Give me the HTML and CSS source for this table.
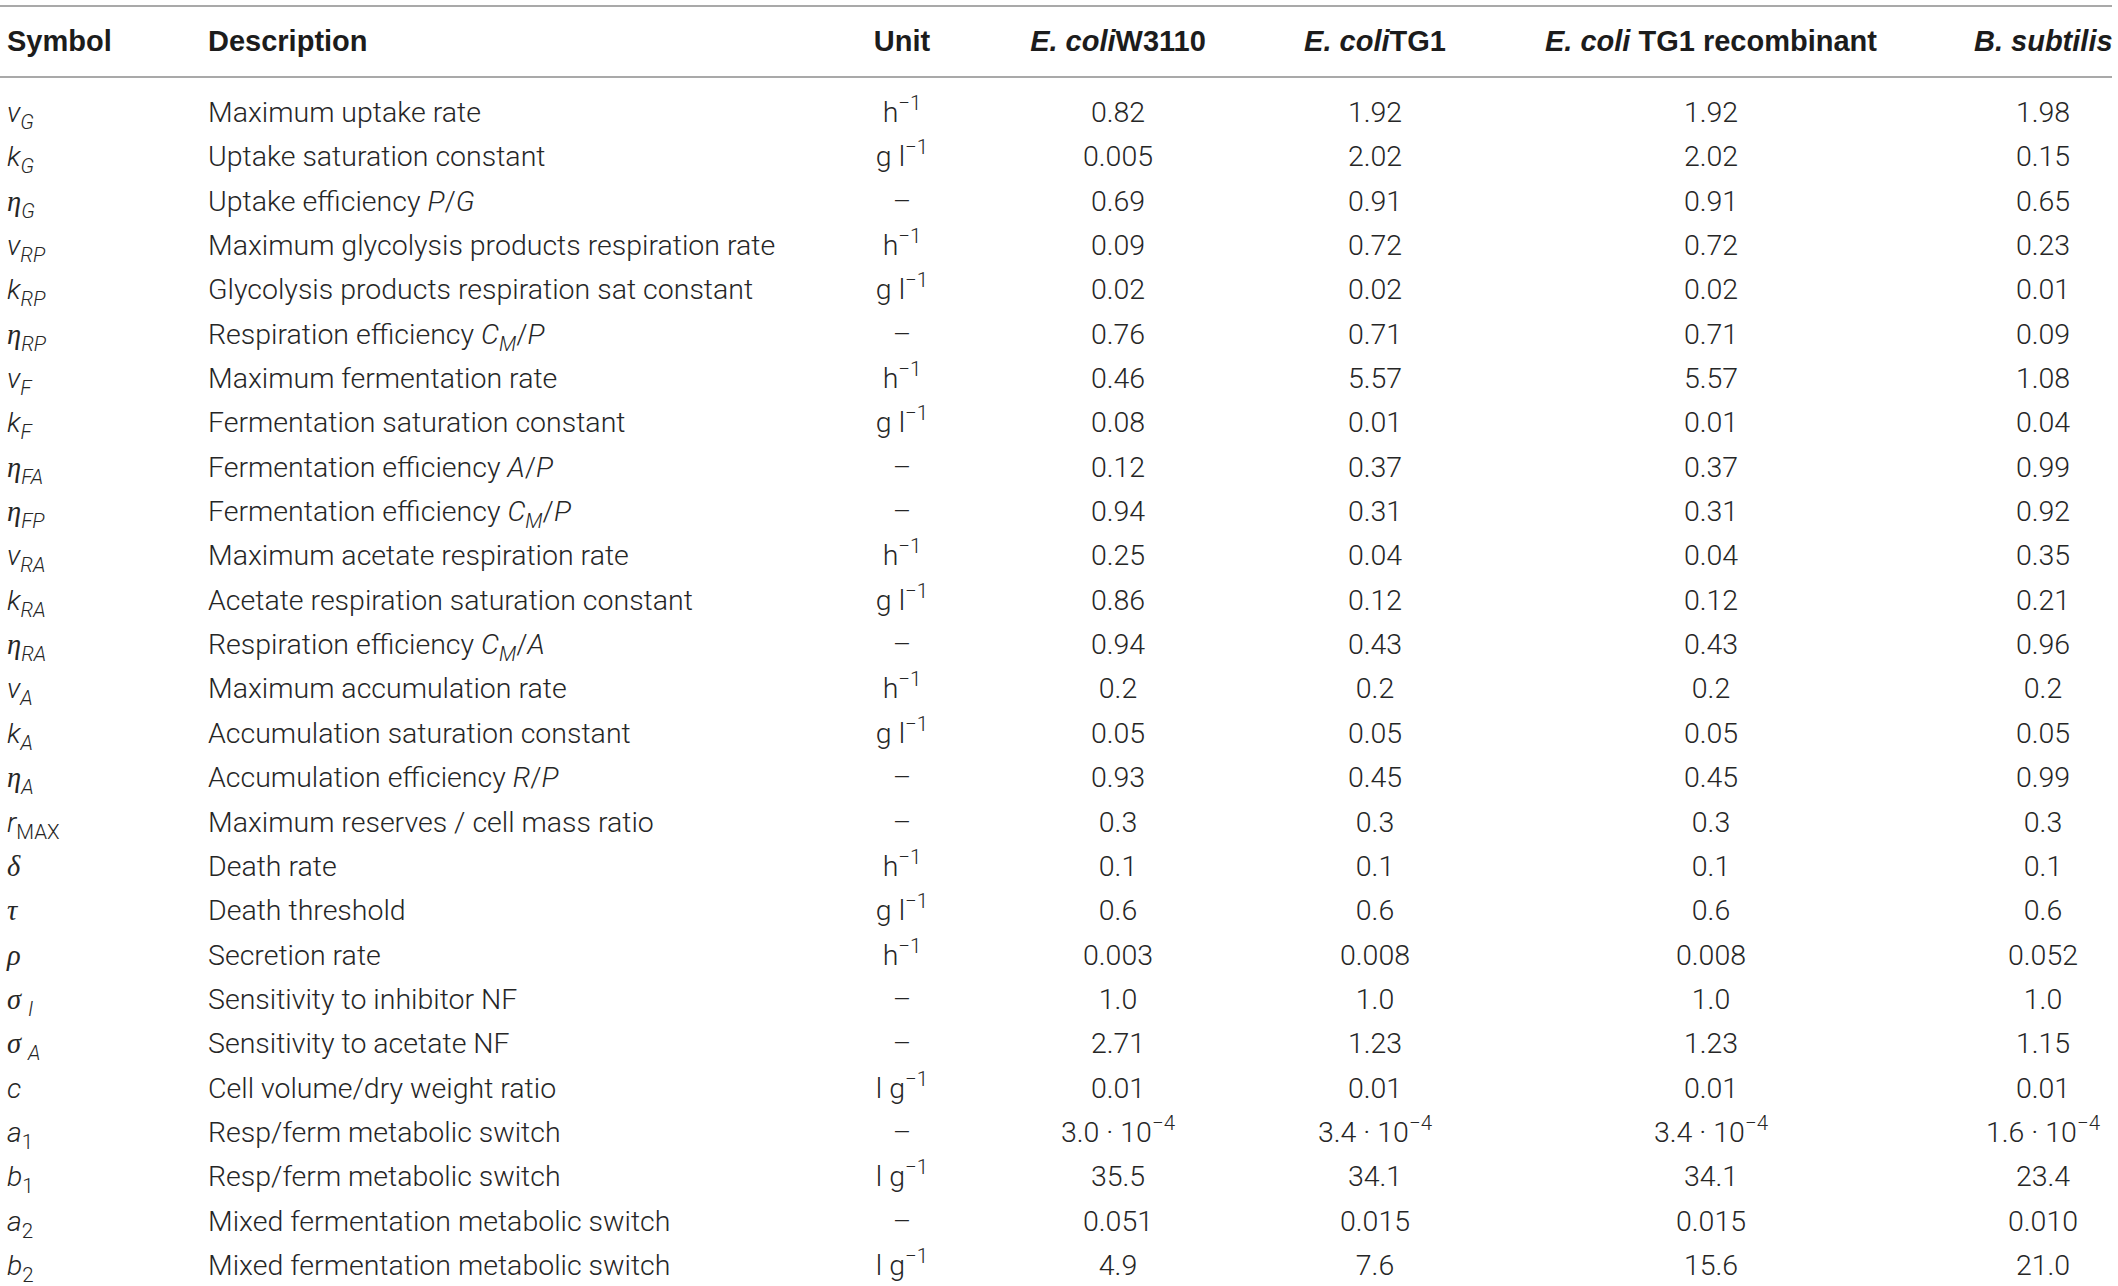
FILE: index.html
```html
<!DOCTYPE html>
<html lang="en">
<head>
    <meta charset="UTF-8">
    <meta name="viewport" content="width=device-width, initial-scale=1.0">
    <title>Model parameters</title>
    <link rel="stylesheet" href="styles.css">
</head>
<body>
    <table class="params">
        <colgroup>
            <col class="c-sym">
            <col class="c-desc">
            <col class="c-unit">
            <col class="c-w3110">
            <col class="c-tg1">
            <col class="c-rec">
            <col class="c-bsub">
        </colgroup>
        <thead>
            <tr>
                <th class="sym">Symbol</th>
                <th class="desc">Description</th>
                <th>Unit</th>
                <th><i>E. coli</i>W3110</th>
                <th><i>E. coli</i>TG1</th>
                <th><i>E. coli</i> TG1 recombinant</th>
                <th class="last"><i>B. subtilis</i></th>
            </tr>
        </thead>
        <tbody>
            <tr><td class="sym"><var>v</var><sub><var>G</var></sub></td><td class="desc">Maximum uptake rate</td><td>h<sup>−1</sup></td><td>0.82</td><td>1.92</td><td>1.92</td><td class="last">1.98</td></tr>
            <tr><td class="sym"><var>k</var><sub><var>G</var></sub></td><td class="desc">Uptake saturation constant</td><td>g l<sup>−1</sup></td><td>0.005</td><td>2.02</td><td>2.02</td><td class="last">0.15</td></tr>
            <tr><td class="sym"><var class="gr">η</var><sub><var>G</var></sub></td><td class="desc">Uptake efficiency <var>P</var>/<var>G</var></td><td>–</td><td>0.69</td><td>0.91</td><td>0.91</td><td class="last">0.65</td></tr>
            <tr><td class="sym"><var>v</var><sub><var>RP</var></sub></td><td class="desc">Maximum glycolysis products respiration rate</td><td>h<sup>−1</sup></td><td>0.09</td><td>0.72</td><td>0.72</td><td class="last">0.23</td></tr>
            <tr><td class="sym"><var>k</var><sub><var>RP</var></sub></td><td class="desc">Glycolysis products respiration sat constant</td><td>g l<sup>−1</sup></td><td>0.02</td><td>0.02</td><td>0.02</td><td class="last">0.01</td></tr>
            <tr><td class="sym"><var class="gr">η</var><sub><var>RP</var></sub></td><td class="desc">Respiration efficiency <var>C</var><sub><var>M</var></sub>/<var>P</var></td><td>–</td><td>0.76</td><td>0.71</td><td>0.71</td><td class="last">0.09</td></tr>
            <tr><td class="sym"><var>v</var><sub><var>F</var></sub></td><td class="desc">Maximum fermentation rate</td><td>h<sup>−1</sup></td><td>0.46</td><td>5.57</td><td>5.57</td><td class="last">1.08</td></tr>
            <tr><td class="sym"><var>k</var><sub><var>F</var></sub></td><td class="desc">Fermentation saturation constant</td><td>g l<sup>−1</sup></td><td>0.08</td><td>0.01</td><td>0.01</td><td class="last">0.04</td></tr>
            <tr><td class="sym"><var class="gr">η</var><sub><var>FA</var></sub></td><td class="desc">Fermentation efficiency <var>A</var>/<var>P</var></td><td>–</td><td>0.12</td><td>0.37</td><td>0.37</td><td class="last">0.99</td></tr>
            <tr><td class="sym"><var class="gr">η</var><sub><var>FP</var></sub></td><td class="desc">Fermentation efficiency <var>C</var><sub><var>M</var></sub>/<var>P</var></td><td>–</td><td>0.94</td><td>0.31</td><td>0.31</td><td class="last">0.92</td></tr>
            <tr><td class="sym"><var>v</var><sub><var>RA</var></sub></td><td class="desc">Maximum acetate respiration rate</td><td>h<sup>−1</sup></td><td>0.25</td><td>0.04</td><td>0.04</td><td class="last">0.35</td></tr>
            <tr><td class="sym"><var>k</var><sub><var>RA</var></sub></td><td class="desc">Acetate respiration saturation constant</td><td>g l<sup>−1</sup></td><td>0.86</td><td>0.12</td><td>0.12</td><td class="last">0.21</td></tr>
            <tr><td class="sym"><var class="gr">η</var><sub><var>RA</var></sub></td><td class="desc">Respiration efficiency <var>C</var><sub><var>M</var></sub>/<var>A</var></td><td>–</td><td>0.94</td><td>0.43</td><td>0.43</td><td class="last">0.96</td></tr>
            <tr><td class="sym"><var>v</var><sub><var>A</var></sub></td><td class="desc">Maximum accumulation rate</td><td>h<sup>−1</sup></td><td>0.2</td><td>0.2</td><td>0.2</td><td class="last">0.2</td></tr>
            <tr><td class="sym"><var>k</var><sub><var>A</var></sub></td><td class="desc">Accumulation saturation constant</td><td>g l<sup>−1</sup></td><td>0.05</td><td>0.05</td><td>0.05</td><td class="last">0.05</td></tr>
            <tr><td class="sym"><var class="gr">η</var><sub><var>A</var></sub></td><td class="desc">Accumulation efficiency <var>R</var>/<var>P</var></td><td>–</td><td>0.93</td><td>0.45</td><td>0.45</td><td class="last">0.99</td></tr>
            <tr><td class="sym"><var>r</var><sub>MAX</sub></td><td class="desc">Maximum reserves / cell mass ratio</td><td>–</td><td>0.3</td><td>0.3</td><td>0.3</td><td class="last">0.3</td></tr>
            <tr><td class="sym"><var class="gr">δ</var></td><td class="desc">Death rate</td><td>h<sup>−1</sup></td><td>0.1</td><td>0.1</td><td>0.1</td><td class="last">0.1</td></tr>
            <tr><td class="sym"><var class="gr">τ</var></td><td class="desc">Death threshold</td><td>g l<sup>−1</sup></td><td>0.6</td><td>0.6</td><td>0.6</td><td class="last">0.6</td></tr>
            <tr><td class="sym"><var class="gr">ρ</var></td><td class="desc">Secretion rate</td><td>h<sup>−1</sup></td><td>0.003</td><td>0.008</td><td>0.008</td><td class="last">0.052</td></tr>
            <tr><td class="sym"><var class="gr">σ</var> <sub><var>I</var></sub></td><td class="desc">Sensitivity to inhibitor NF</td><td>–</td><td>1.0</td><td>1.0</td><td>1.0</td><td class="last">1.0</td></tr>
            <tr><td class="sym"><var class="gr">σ</var> <sub><var>A</var></sub></td><td class="desc">Sensitivity to acetate NF</td><td>–</td><td>2.71</td><td>1.23</td><td>1.23</td><td class="last">1.15</td></tr>
            <tr><td class="sym"><var>c</var></td><td class="desc">Cell volume/dry weight ratio</td><td>l g<sup>−1</sup></td><td>0.01</td><td>0.01</td><td>0.01</td><td class="last">0.01</td></tr>
            <tr><td class="sym"><var>a</var><sub>1</sub></td><td class="desc">Resp/ferm metabolic switch</td><td>–</td><td>3.0 · 10<sup>−4</sup></td><td>3.4 · 10<sup>−4</sup></td><td>3.4 · 10<sup>−4</sup></td><td class="last">1.6 · 10<sup>−4</sup></td></tr>
            <tr><td class="sym"><var>b</var><sub>1</sub></td><td class="desc">Resp/ferm metabolic switch</td><td>l g<sup>−1</sup></td><td>35.5</td><td>34.1</td><td>34.1</td><td class="last">23.4</td></tr>
            <tr><td class="sym"><var>a</var><sub>2</sub></td><td class="desc">Mixed fermentation metabolic switch</td><td>–</td><td>0.051</td><td>0.015</td><td>0.015</td><td class="last">0.010</td></tr>
            <tr><td class="sym"><var>b</var><sub>2</sub></td><td class="desc">Mixed fermentation metabolic switch</td><td>l g<sup>−1</sup></td><td>4.9</td><td>7.6</td><td>15.6</td><td class="last">21.0</td></tr>
        </tbody>
    </table>
</body>
</html>
```

FILE: styles.css
```css
body {
    margin: 0;
    background: #fff;
    color: #262626;
    font-family: Roboto, "Liberation Sans", sans-serif;
    font-weight: 300;
}
.params {
    width: 2112px;
    margin-top: 5px;
    border-collapse: separate;
    border-spacing: 0;
    table-layout: fixed;
}
.c-sym { width: 201px; }
.c-desc { width: 593px; }
.c-unit { width: 216px; }
.c-w3110 { width: 216px; }
.c-tg1 { width: 298px; }
.c-rec { width: 374px; }
.c-bsub { width: 214px; }

.params th {
    height: 69px;
    padding: 0;
    border-top: 2px solid #a9a9a9;
    border-bottom: 2px solid #a9a9a9;
    font-family: "Liberation Sans", Arial, sans-serif;
    font-weight: bold;
    font-size: 29px;
    color: #1c1c1c;
    text-align: center;
    white-space: nowrap;
}
.params td {
    padding: 0;
    font-size: 28.5px;
    line-height: 44.35px;
    text-align: center;
    white-space: nowrap;
}
.params tbody tr:first-child td {
    padding-top: 13px;
}
.params .sym {
    text-align: left;
    padding-left: 7px;
}
.params .desc {
    text-align: left;
    padding-left: 7px;
}
.params .last {
    padding-left: 76px;
}
var {
    font-style: italic;
}
.gr {
    font-family: "Liberation Serif", serif;
    font-weight: normal;
}
sub, sup {
    line-height: 0;
    font-size: 0.72em;
}
sub {
    vertical-align: -0.32em;
}
sup {
    vertical-align: 0.6em;
}
```
